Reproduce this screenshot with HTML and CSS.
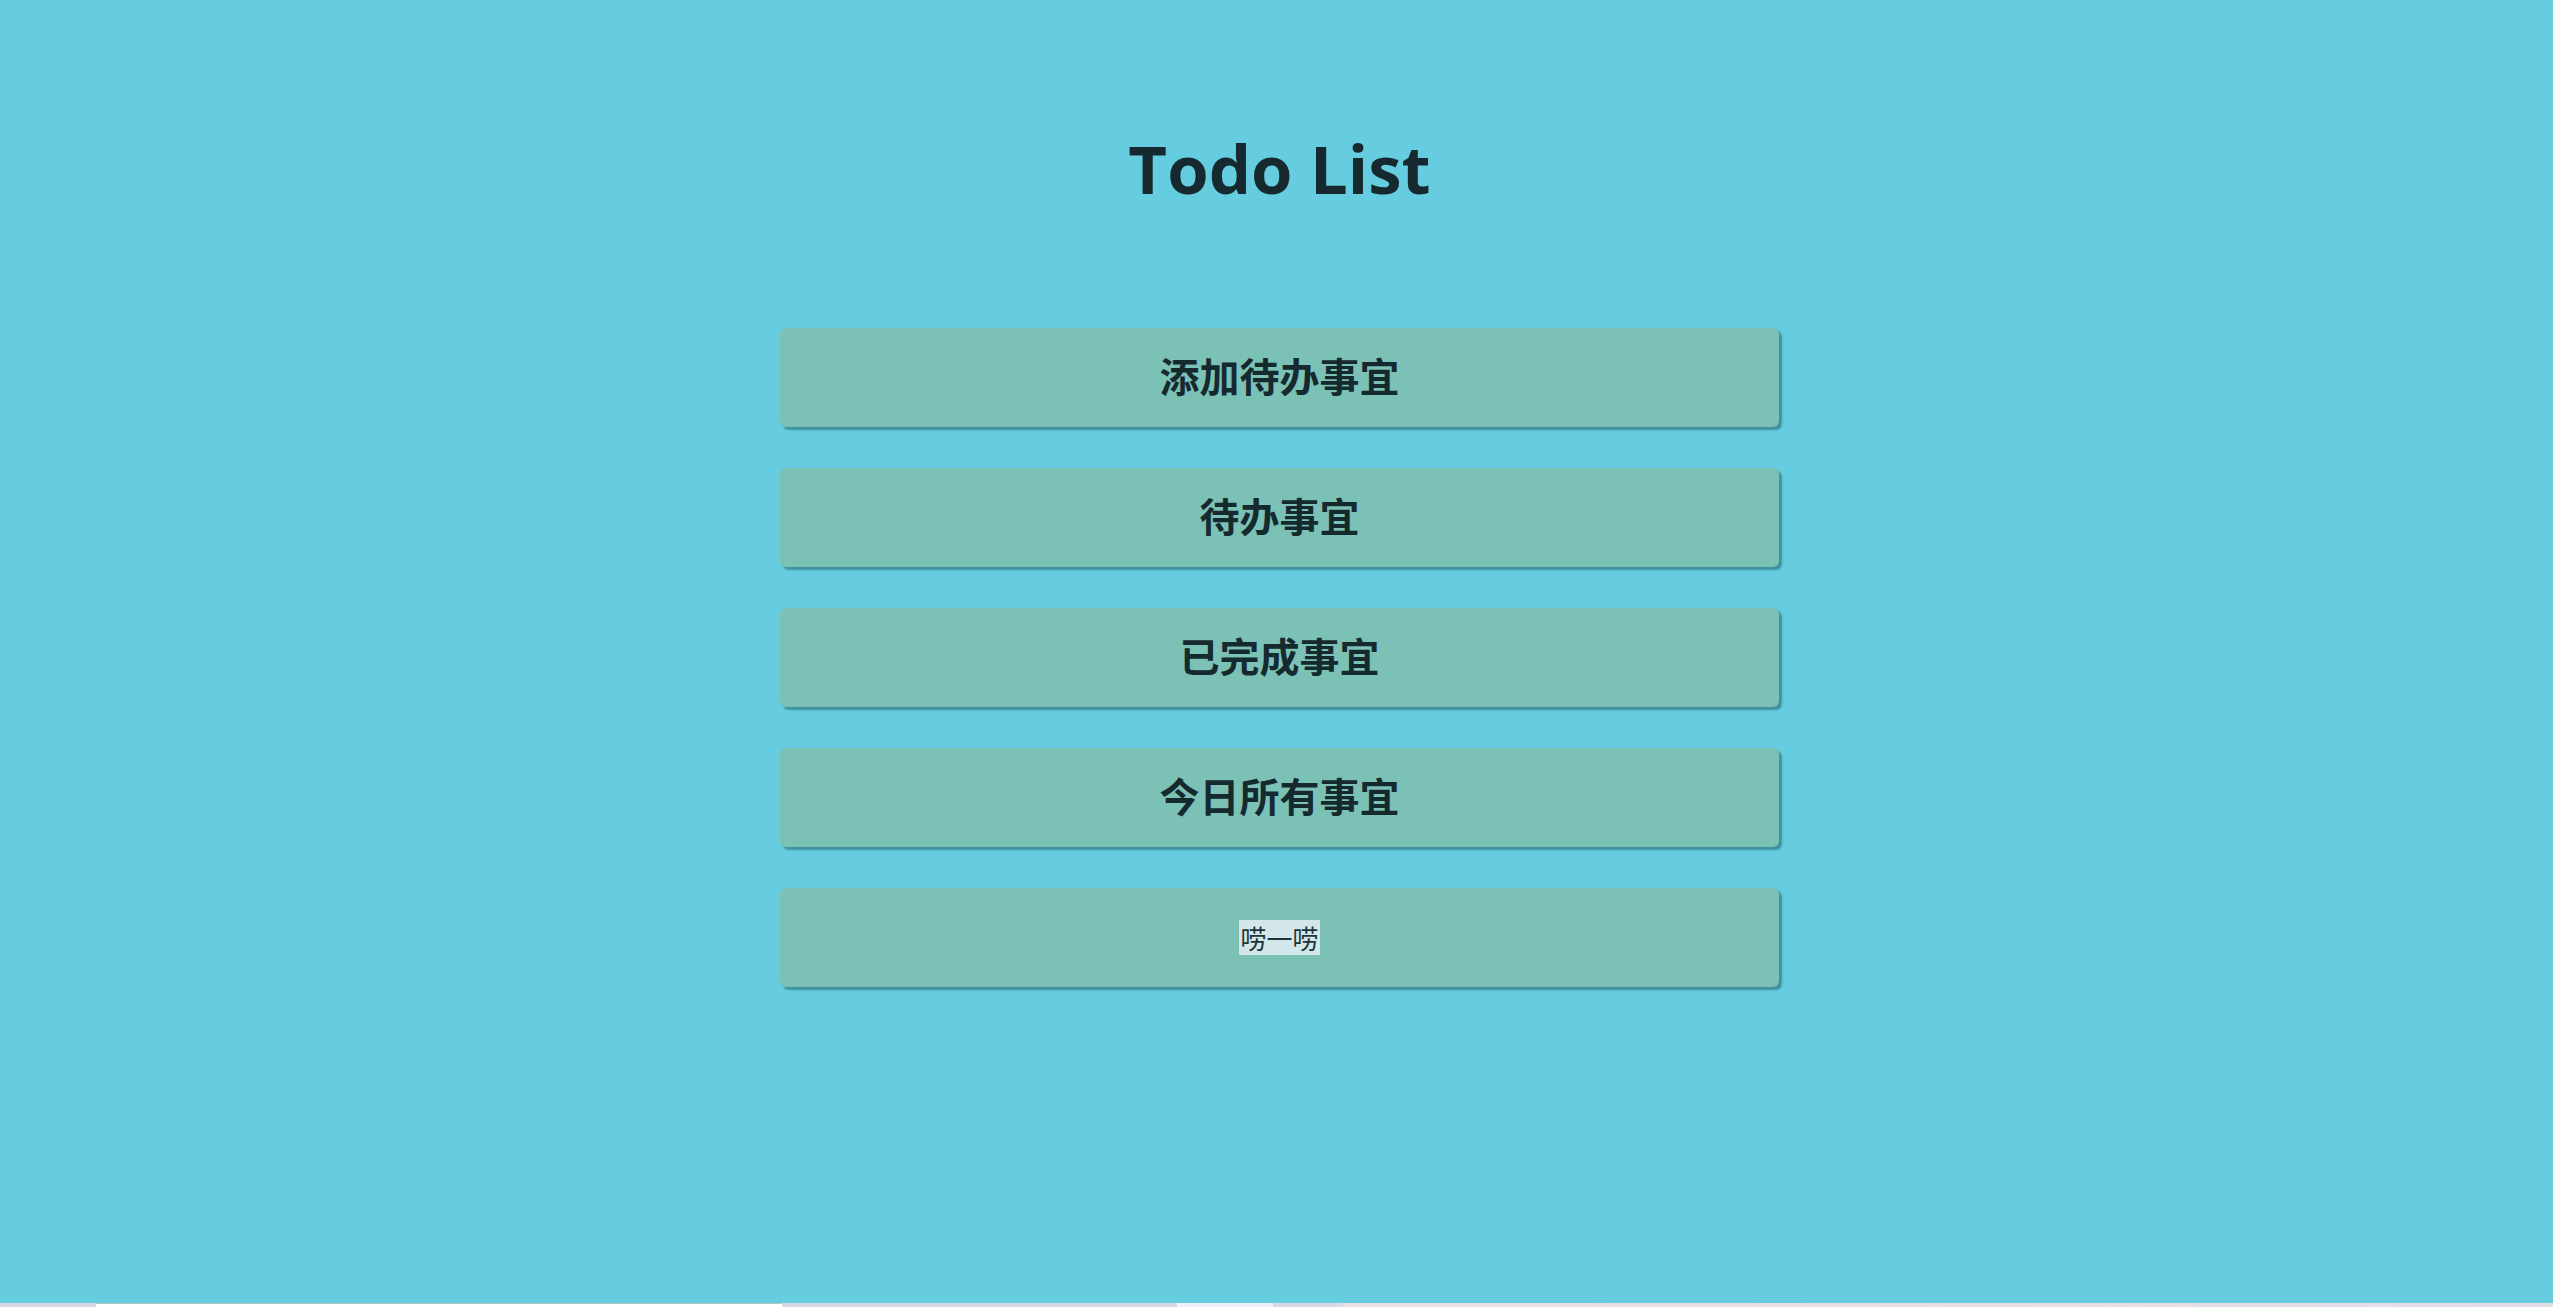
FILE: index.html
```html
<!DOCTYPE html>
<html lang="zh">
<head>
<meta charset="utf-8">
<title>Todo List</title>
<link rel="stylesheet" href="styles.css">
</head>
<body>
<div class="page">
  <main class="main">
    <h1 class="title">Todo List</h1>
    <nav class="menu">
      <div class="btn">添加待办事宜</div>
      <div class="btn">待办事宜</div>
      <div class="btn">已完成事宜</div>
      <div class="btn">今日所有事宜</div>
      <div class="btn btn-plain"><span class="sel">唠一唠</span></div>
    </nav>
  </main>
  <div class="strip">
    <span class="seg s1"></span>
    <span class="seg s2"></span>
    <span class="seg s3"></span>
    <span class="seg s4"></span>
    <span class="seg s5"></span>
    <span class="seg s6"></span>
  </div>
</div>
</body>
</html>
```

FILE: styles.css
```css
html, body {
  margin: 0;
  padding: 0;
  height: 100%;
}
body {
  background: #66cde0;
  font-family: "Open Sans", "Noto Sans CJK SC", sans-serif;
  color: #152a2f;
}
.page {
  display: flex;
  flex-direction: column;
  height: 100vh;
}
.main {
  flex: 1;
  display: flex;
  flex-direction: column;
  align-items: center;
}
.title {
  margin: 135px 0 0 6px;
  font-size: 67px;
  line-height: 67px;
  font-weight: 700;
  color: #15292f;
}
.menu {
  margin-top: 126px;
  display: flex;
  flex-direction: column;
  gap: 41px;
  width: 999px;
  margin-left: 6px;
}
.btn {
  height: 99px;
  box-sizing: border-box;
  padding-bottom: 5px;
  background: #7bc1b6;
  border-radius: 6px;
  box-shadow: 3px 3px 2px rgba(20, 70, 80, 0.45);
  display: flex;
  align-items: center;
  justify-content: center;
  font-family: "Noto Sans CJK SC", sans-serif;
  font-weight: 700;
  font-size: 40px;
  color: #152a2f;
}
.btn-plain {
  padding-bottom: 0;
  font-weight: 400;
  font-size: 26px;
}
.sel {
  background: #d3e7ea;
  color: #1d3338;
  line-height: 35px;
  padding: 0 1px;
}
.strip {
  height: 4px;
  display: flex;
}
.seg { display: block; height: 100%; }
.s1 { width: 96px; background: #d8d8e8; }
.s2 { width: 686px; background: #ffffff; border-top: 1px solid #b8c4c8; box-sizing: border-box; }
.s3 { width: 395px; background: #d6d8e8; }
.s4 { width: 96px; background: #eef2f8; }
.s5 { width: 70px; background: #d8d8e8; }
.s6 { flex: 1; background: linear-gradient(90deg, #eadfe0, #e4dde8); }
```
